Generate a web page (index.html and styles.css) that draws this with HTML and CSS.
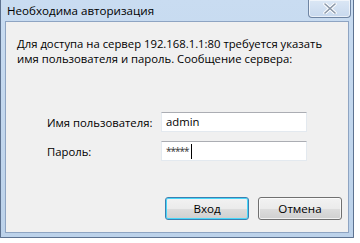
FILE: index.html
```html
<!DOCTYPE html>
<html lang="ru">
<head>
    <meta charset="UTF-8">
    <title>Необходима авторизация</title>
    <link rel="stylesheet" href="styles.css">
</head>
<body>
    <div class="window">
        <div class="titlebar">
            <span class="title">Необходима авторизация</span>
            <button class="close-button" aria-label="Закрыть">
                <svg width="14" height="11" viewBox="0 0 14 11">
                    <path d="M2 1 L12 10 M12 1 L2 10" stroke="#fff" stroke-width="3.4" stroke-linecap="round"/>
                    <path d="M2 1 L12 10 M12 1 L2 10" stroke="#8a97a8" stroke-width="1.6" stroke-linecap="round"/>
                </svg>
            </button>
        </div>
        <div class="content">
            <p class="message">Для доступа на сервер 192.168.1.1:80 требуется указать имя пользователя и пароль. Сообщение сервера:</p>
            <div class="form">
                <label class="form-row">
                    <span class="label">Имя пользователя:</span>
                    <span class="field">admin</span>
                </label>
                <label class="form-row">
                    <span class="label">Пароль:</span>
                    <span class="field password">*****<i class="caret"></i></span>
                </label>
            </div>
            <div class="buttons">
                <button class="btn default">Вход</button>
                <button class="btn">Отмена</button>
            </div>
        </div>
    </div>
</body>
</html>
```

FILE: styles.css
```css
body {
    margin: 0;
    background-color: #ffffff;
    font-family: 'Open Sans', 'Noto Sans', sans-serif;
    font-size: 11.3px;
    color: #000;
}
.window {
    width: 354px;
    height: 238px;
    box-sizing: border-box;
    display: flex;
    flex-direction: column;
    background: linear-gradient(#c9dcf1, #bcd2ea);
    border: 1px solid #5d7290;
    border-top: none;
    border-radius: 0 0 1px 1px;
    padding: 0 4px 4px 4px;
}
.titlebar {
    height: 21px;
    display: flex;
    align-items: flex-start;
    justify-content: space-between;
}
.title {
    padding: 3px 0 0 2px;
    font-size: 11.6px;
    line-height: 16px;
}
.close-button {
    width: 43px;
    height: 18px;
    margin-right: -2px;
    border: 1px solid #6f85a3;
    border-top: none;
    border-radius: 0 0 4px 4px;
    background: linear-gradient(#dbe7f5, #c8d9ee);
    box-shadow: inset 0 0 0 1px rgba(255, 255, 255, 0.6);
    display: flex;
    align-items: center;
    justify-content: center;
    padding: 0;
}
.content {
    flex: 1;
    background-color: #f0f0f0;
    border: 1px solid #8ea4c2;
    padding: 0 6px 12px 11px;
    display: flex;
    flex-direction: column;
}
.message {
    margin: 14px 0 0 0;
    line-height: 15px;
    width: 318px;
}
.form {
    margin: 46px 0 0 30px;
    display: flex;
    flex-direction: column;
    gap: 9px;
}
.form-row {
    display: flex;
    align-items: center;
}
.label {
    width: 114px;
}
.field {
    width: 140px;
    height: 18px;
    line-height: 18px;
    background-color: #fff;
    border: 1px solid #e3e9ef;
    border-top-color: #abadb3;
    padding-left: 4px;
    display: flex;
    align-items: center;
}
.password {
    font-size: 10px;
    letter-spacing: -1px;
    color: #333;
}
.caret {
    width: 1px;
    height: 15px;
    margin-left: 2px;
    background-color: #000;
}
.buttons {
    margin-top: auto;
    display: flex;
    justify-content: flex-end;
    gap: 9px;
}
.btn {
    width: 84px;
    height: 23px;
    font-family: inherit;
    font-size: 11.6px;
    border: 1px solid #707070;
    border-radius: 3px;
    background: linear-gradient(#f2f2f2 0%, #ebebeb 50%, #dddddd 51%, #cfcfcf 100%);
    box-shadow: inset 0 0 0 1px rgba(255, 255, 255, 0.7);
    padding: 0;
}
.btn.default {
    border-color: #3c7fb1;
    box-shadow: inset 0 0 0 1px #48d7f9;
}
```
